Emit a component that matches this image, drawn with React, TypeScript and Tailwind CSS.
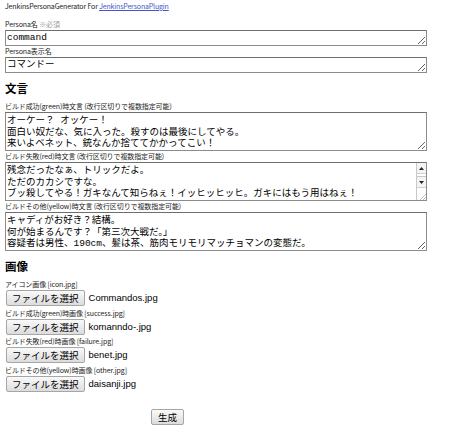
import React from 'react';

// --- Form data ---
interface MessageField {
  label: string;
  value: string;
  scroll?: boolean;
}

interface ImageField {
  label: string;
  file: string;
}

const messageFields: MessageField[] = [
  {
    label: 'ビルド成功(green)時文言 (改行区切りで複数指定可能)',
    value: 'オーケー？ オッケー！\n面白い奴だな、気に入った。殺すのは最後にしてやる。\n来いよベネット、銃なんか捨ててかかってこい！',
  },
  {
    label: 'ビルド失敗(red)時文言 (改行区切りで複数指定可能)',
    value: '残念だったなぁ、トリックだよ。\nただのカカシですな。\nブッ殺してやる！ガキなんて知らねぇ！イッヒッヒッヒ。ガキにはもう用はねぇ！',
    scroll: true,
  },
  {
    label: 'ビルドその他(yellow)時文言 (改行区切りで複数指定可能)',
    value: 'キャディがお好き？結構。\n何が始まるんです？「第三次大戦だ。」\n容疑者は男性、190cm、髪は茶、筋肉モリモリマッチョマンの変態だ。',
  },
];

const imageFields: ImageField[] = [
  { label: 'アイコン画像 [icon.jpg]', file: 'Commandos.jpg' },
  { label: 'ビルド成功(green)時画像 [success.jpg]', file: 'komanndo-.jpg' },
  { label: 'ビルド失敗(red)時画像 [failure.jpg]', file: 'benet.jpg' },
  { label: 'ビルドその他(yellow)時画像 [other.jpg]', file: 'daisanji.jpg' },
];

const labelCls = "h-[11px] leading-[11px] text-[7px] text-[#222] tracking-[-0.1px] whitespace-nowrap";
const areaCls = "block w-[422px] resize bg-white text-black text-[9.5px] leading-[11.7px] pl-[1px] border border-[#8c8c8c] border-t-[#6e6e6e] outline-none font-['Liberation_Mono','Noto_Sans_CJK_JP',monospace]";
const btnCls = "h-[16px] rounded-[2px] border border-[#a6a6a6] bg-gradient-to-b from-[#fafafa] to-[#dcdcdc] text-[9.5px] leading-[14px] text-black font-['Noto_Sans_CJK_JP',sans-serif]";

// Classic scrollbar drawn over the right edge of a textarea
const FakeScrollbar: React.FC = () => (
  <div className="absolute right-[1px] top-[1px] bottom-[1px] w-[10px] border-l border-[#c8c8c8] bg-white flex flex-col">
    <div className="h-[11px] flex items-center justify-center border-b border-[#d0d0d0] bg-[#f4f4f4]">
      <svg width="5" height="3" viewBox="0 0 5 3"><polygon points="2.5,0 5,3 0,3" fill="#222" /></svg>
    </div>
    <div className="h-[3px] border-b border-[#c8c8c8]" />
    <div className="h-[11px] flex items-center justify-center border-b border-[#d0d0d0] bg-[#f4f4f4]">
      <svg width="5" height="3" viewBox="0 0 5 3"><polygon points="0,0 5,0 2.5,3" fill="#222" /></svg>
    </div>
    <div className="flex-1 flex items-end justify-end">
      <svg width="7" height="7" viewBox="0 0 7 7">
        <line x1="1" y1="7" x2="7" y2="1" stroke="#b0b0b0" strokeWidth="0.8" />
        <line x1="4" y1="7" x2="7" y2="4" stroke="#b0b0b0" strokeWidth="0.8" />
      </svg>
    </div>
  </div>
);

export default function App() {
  return (
    <div className="w-[450px] min-h-[427px] bg-white pl-[5px] font-['Noto_Sans_CJK_JP',sans-serif]">
      {/* Header */}
      <div className="h-[13px] leading-[13px] text-[7px] text-[#222] tracking-[-0.15px] whitespace-nowrap">
        JenkinsPersonaGenerator For <a href="#" className="text-[#4455cc] underline">JenkinsPersonaPlugin</a>
      </div>

      {/* Persona */}
      <div className={`${labelCls} mt-[6px]`}>
        Persona名 <span className="text-[#999]">※必須</span>
      </div>
      <textarea className={`${areaCls} h-[16px] pt-[1px] overflow-hidden`} defaultValue="command" rows={1} />
      <div className={labelCls}>Persona表示名</div>
      <textarea className={`${areaCls} h-[16px] pt-[1px] overflow-hidden`} defaultValue="コマンドー" rows={1} />

      {/* Messages */}
      <h2 className="pt-[9px] pb-[6px] leading-[13px] text-[11.5px] font-bold text-black">文言</h2>
      {messageFields.map(f => (
        <div key={f.label}>
          <div className={labelCls}>{f.label}</div>
          <div className="relative w-[422px]">
            <textarea
              className={`${areaCls} h-[39px] pt-[2px] overflow-hidden ${f.scroll ? 'pr-[12px]' : ''}`}
              defaultValue={f.value}
            />
            {f.scroll && <FakeScrollbar />}
          </div>
        </div>
      ))}

      {/* Images */}
      <h2 className="pt-[9px] pb-[6px] leading-[13px] text-[11.5px] font-bold text-black">画像</h2>
      {imageFields.map(f => (
        <div key={f.label}>
          <div className={labelCls}>{f.label}</div>
          <div className="h-[17.5px] flex items-start gap-[4px] pl-[1px]">
            <button className={`${btnCls} px-[5px]`}>ファイルを選択</button>
            <span className="leading-[16px] text-[9.5px] text-black font-['Liberation_Sans',sans-serif]">{f.file}</span>
          </div>
        </div>
      ))}

      <div className="mt-[9px] ml-[146px]">
        <button className={`${btnCls} px-[6px]`}>生成</button>
      </div>
    </div>
  );
}
